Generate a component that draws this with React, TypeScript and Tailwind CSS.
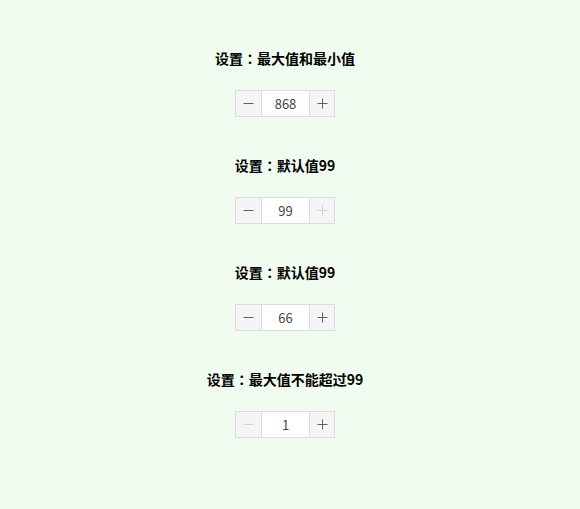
import React from "react";

const font = { fontFamily: '"Noto Sans CJK SC", "Noto Sans", sans-serif' };
const colonFont = { fontFamily: '"Noto Sans CJK TC", "Noto Sans CJK SC", sans-serif' };

function Minus({ disabled }: { disabled?: boolean }) {
  return (
    <svg width="11" height="11" viewBox="0 0 11 11">
      <line x1="0.5" y1="5.5" x2="10.5" y2="5.5" stroke={disabled ? "#d4d4d4" : "#606060"} strokeWidth="1" />
    </svg>
  );
}

function Plus({ disabled }: { disabled?: boolean }) {
  return (
    <svg width="11" height="11" viewBox="0 0 11 11">
      <line x1="0.5" y1="5.5" x2="10.5" y2="5.5" stroke={disabled ? "#d4d4d4" : "#606060"} strokeWidth="1" />
      <line x1="5.5" y1="0.5" x2="5.5" y2="10.5" stroke={disabled ? "#d4d4d4" : "#606060"} strokeWidth="1" />
    </svg>
  );
}

function Stepper({ value, minDisabled, maxDisabled }: { value: string; minDisabled?: boolean; maxDisabled?: boolean }) {
  return (
    <div className="flex h-[27px] w-[100px] border border-[#dcdcdc] bg-white">
      <div className="flex w-[26px] items-center justify-center bg-[#f5f5f5] border-r border-[#dcdcdc]">
        <Minus disabled={minDisabled} />
      </div>
      <div className="flex flex-1 items-center justify-center text-[13px] text-[#444]" style={font}>
        {value}
      </div>
      <div className="flex w-[25px] items-center justify-center bg-[#f5f5f5] border-l border-[#dcdcdc]">
        <Plus disabled={maxDisabled} />
      </div>
    </div>
  );
}

const items = [
  { title: "最大值和最小值", value: "868" },
  { title: "默认值99", value: "99", maxDisabled: true },
  { title: "默认值99", value: "66" },
  { title: "最大值不能超过99", value: "1", minDisabled: true },
];

export default function App() {
  return (
    <div className="min-h-[509px] w-full bg-[#f0fcf0] pt-[48px] pr-[10px]" style={font}>
      <div className="flex flex-col items-center gap-[38px]">
        {items.map((it, i) => (
          <div key={i} className="flex flex-col items-center gap-[22px]">
            <div className="text-[14px] leading-[20px] font-bold text-black">
              设置<span style={colonFont}>：</span>
              {it.title}
            </div>
            <Stepper value={it.value} minDisabled={it.minDisabled} maxDisabled={it.maxDisabled} />
          </div>
        ))}
      </div>
    </div>
  );
}
